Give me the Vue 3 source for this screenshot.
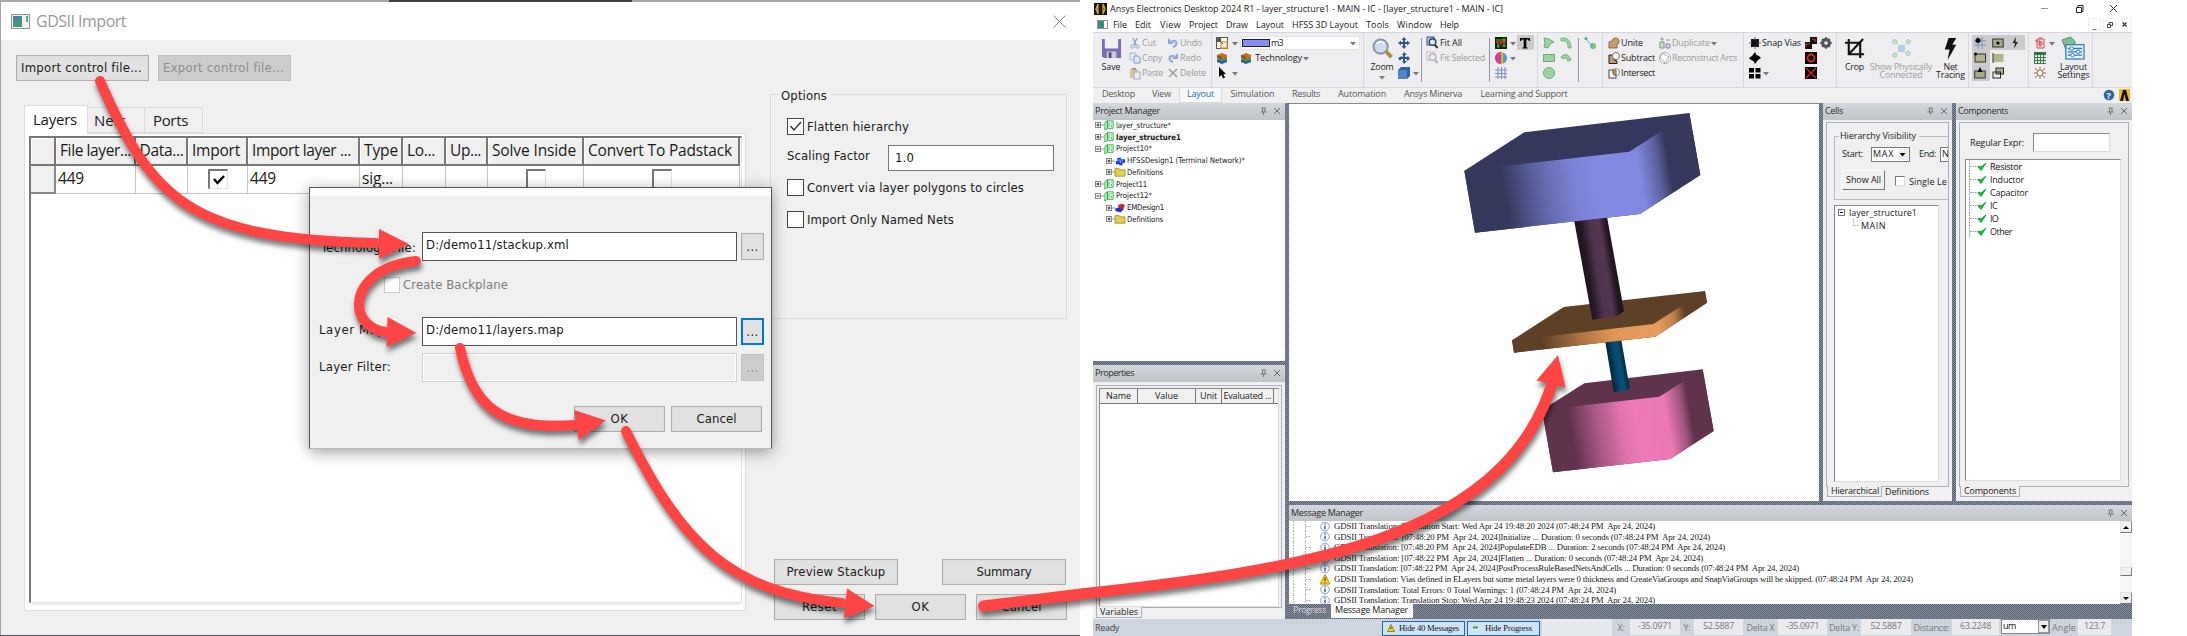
<script setup>
// Spreads a label over a given width by adjusting its letter spacing.
const vFit = {
  mounted(el, { value }) {
    if (!value) return
    const n = el.textContent.length
    const w = el.getBoundingClientRect().width
    el.style.letterSpacing = (value - w) / n + 'px'
  },
}

const columns = [
  { t: '', w: 25 }, { t: 'File layer...', w: 79.5, f: 71 }, { t: 'Data...', w: 52.5, f: 44 },
  { t: 'Import', w: 60, f: 48 }, { t: 'Import layer ...', w: 112, f: 99 }, { t: 'Type', w: 43, f: 34 },
  { t: 'Lo...', w: 43, f: 28 }, { t: 'Up...', w: 42, f: 31 }, { t: 'Solve Inside', w: 96, f: 84 },
  { t: 'Convert To Padstack', w: 156, f: 144 },
]
const gridCols = columns.map((c) => c.w + 'px').join(' ')

const icons = {
  drop: '<path d="M3 5h6L6 8.500z" fill="#777"/>',
  pin: '<path d="M1.500 1h4M2.500 1v4M5 1v4M.5 5h6M3.500 5v3" stroke="#777" fill="none"/><path d="M14 1l6 6M20 1l-6 6" stroke="#666"/>',
  stack: '<path d="M1 8l5-2 5 2v2l-5 2-5-2z" fill="#2d5aa8"/><path d="M1 5.500l5-2 5 2v2l-5 2-5-2z" fill="#2f9a4a"/><path d="M1 3l5-2 5 2v2L6 7 1 5z" fill="#d2691e"/><path d="M1 3l5 2v2L1 5z" fill="#a33"/>',
  cut: '<path d="M4 1l3 7M8 1L5 8" stroke="#8fa6c8" stroke-width="1.400"/><circle cx="3.500" cy="9.500" r="1.700" fill="none" stroke="#8fa6c8"/><circle cx="8.500" cy="9.500" r="1.700" fill="none" stroke="#8fa6c8"/>',
  copy: '<path d="M1 1h5l1 1v6H1z" fill="#e6eefa" stroke="#9db4d8"/><path d="M5 4h4l2 2v5H5z" fill="#dfe9f8" stroke="#7f9ccb"/>',
  paste: '<rect x="1" y="2" width="8" height="9" fill="#e3c58d"/><rect x="3" y="1" width="4" height="2" fill="#999"/><rect x="5" y="5" width="6" height="7" fill="#e9eff8" stroke="#9ab"/>',
  undo: '<path d="M5 4h2c4 0 3 5-1 6" fill="none" stroke="#8aa6da" stroke-width="2"/><path d="M1 1v6h6z" fill="#8aa6da"/>',
  redo: '<path d="M7 4H5c-4 0-3 5 1 6" fill="none" stroke="#8aa6da" stroke-width="2"/><path d="M11 1v6H5z" fill="#8aa6da"/>',
  del: '<path d="M2 2l8 8M10 2l-8 8" stroke="#999" stroke-width="1.500"/>',
  select: '<rect x=".5" y=".5" width="11" height="11" fill="#fff" stroke="#555"/><rect x="1" y="1" width="4" height="4" fill="#555"/><rect x="5" y="5" width="6" height="6" fill="#fff" stroke="#e8943a" stroke-width="1.400"/><path d="M2 2l5 5" stroke="#555"/>',
  cursor: '<path d="M3 0v10l2.500-2L7 11.500l2-1L7.500 7H10z" fill="#000"/>',
  move: '<path d="M6 0l2.500 3H7v2h2V3.500L12 6 9 8.500V7H7v2h1.500L6 12 3.500 9H5V7H3v1.500L0 6l3-2.500V5h2V3H3.500z" fill="#2c5a8c"/>',
  rotate: '<path d="M6 0l3 3H7v2c3 0 3-1 3-1l2 3-3 2V7H7v2h2l-3 3-2-3h1V7c-3 0-3 2-3 2L0 6l4-2v1h1V3H4z" fill="#2c5a8c"/>',
  cube: '<path d="M0 3l3-3h9v9l-3 3H0z" fill="#2c5f9e"/><rect x="0" y="3" width="9" height="9" fill="#4f86c8"/>',
  fitall: '<rect x="0" y="0" width="7" height="8" fill="#cfd8ea" stroke="#334c78"/><circle cx="5.500" cy="5" r="3.300" fill="#dde6f3" stroke="#2b3d63" stroke-width="1.400"/><path d="M8 8l2.500 3" stroke="#333" stroke-width="2"/>',
  fitsel: '<rect x="0" y="0" width="7" height="8" fill="#fff" stroke="#d9a9a9"/><circle cx="5.500" cy="5" r="3.300" fill="#f1eef2" stroke="#b3b3bd" stroke-width="1.400"/><path d="M8 8l2.500 3" stroke="#b3b3bd" stroke-width="2"/>',
  board: '<rect width="12" height="12" fill="#10230b"/><path d="M1 3h10M2 9h3M7 9h4M3 5v6M9 1v9" stroke="#5fc020" stroke-width="1.200"/><path d="M1 5h10M6 5v3" stroke="#f02020" stroke-width="1.600"/>',
  rainbow: '<circle cx="6" cy="6" r="6" fill="#f3c530"/><path d="M6 0a6 6 0 0 0 0 12z" fill="#e0327c"/><path d="M4 .4v11.200L2 10.500v-9z" fill="#b04ae0"/><path d="M8 .4v11.200a6 6 0 0 0 0-11.200z" fill="#39a4e8"/><path d="M5 0h1.500v12H5z" fill="#f05a2a"/>',
  grid: '<path d="M0 3h12M0 6.500h12M0 10h12M3 0v12M6.500 0v12M10 0v12" stroke="#7d8dbd"/>',
  text: '<rect x="-2" y="-2" width="17" height="15" fill="#cbcbcd"/><path d="M1 1h10v3h-1L9 2.500H7.300V10l1.200.800v.7h-5v-.7L4.700 10V2.500H3L2 4H1z" fill="#000"/>',
  poly: '<path d="M1 1l5 1 5 3-4 2-2 4-4-1 1-4z" fill="#9cd3a1" stroke="#6fa877"/>',
  rect: '<rect x=".5" y="2.500" width="11" height="7" fill="#9cd3a1" stroke="#6fa877"/>',
  circle: '<circle cx="6" cy="6" r="5.500" fill="#9cd3a1" stroke="#6fa877"/>',
  arc: '<path d="M1 1h3c4 0 7 3 7 10H8C8 7 7 4 4 4H1z" fill="#9cd3a1" stroke="#6fa877" stroke-width=".8"/>',
  arc2: '<path d="M1 5c3-4 8-3 10 3l-3 1C7 6 5 5 3 7z" fill="#9cd3a1" stroke="#6fa877"/>',
  line: '<path d="M2 2l6 7" stroke="#6a9cc8"/><circle cx="2" cy="1.500" r="1.500" fill="#3dab8a"/><circle cx="9" cy="9" r="3" fill="#5ab8d8"/><path d="M9 6a3 3 0 0 1 0 6z" fill="#98c840"/>',
  unite: '<path d="M1 5l3-1c0-4 7-4 7 0 0 3-2 4-2 4v3H1z" fill="#c79c6c" stroke="#8a6844"/>',
  subtract: '<path d="M1 3h4l1 5 3 1v2.500H1z" fill="#c79c6c" stroke="#222"/><circle cx="8" cy="4" r="3.500" fill="#fff" stroke="#777"/>',
  intersect: '<rect x="1" y="3" width="7" height="8" fill="#fff" stroke="#444"/><circle cx="8" cy="5" r="3.500" fill="#fff" stroke="#888"/><path d="M5 3h3v5H6z" fill="#c79c6c" stroke="#8a6844"/>',
  dup: '<path d="M1 5h4v6H1z" fill="#cde5cf" stroke="#888"/><path d="M7 7h4v4H7z" fill="#cdd2f0" stroke="#88a"/><path d="M3 0v4M1 2h4M7 3h4" stroke="#999"/>',
  recon: '<circle cx="6" cy="6" r="5.500" fill="#fff" stroke="#aaa"/><path d="M3 1l7 4-4 6-5-6z" fill="none" stroke="#aaa"/>',
  snap: '<rect x="2" y="2" width="8" height="8" fill="#111"/><path d="M6 0v12M0 6h12" stroke="#5a6aaa"/><rect x="3" y="3" width="6" height="6" fill="#111"/>',
  diamond: '<path d="M6 0l1.500 3L10 4l2 2-3 2-1.500 2L6 12 4.500 9 2 8 0 6l3-2z" fill="#000"/>',
  four: '<path d="M0 1h5v4.500H0zM6.500 1h5v4.500h-5zM0 7h5v4.500H0zM6.500 7h5v4.500h-5z" fill="#000"/>',
  via1: '<rect x="5" width="7" height="7" fill="#111"/><rect y="5" width="7" height="7" fill="#111"/><path d="M7 2h3v3M1 10V7h4" stroke="#e33" fill="none"/>',
  via2: '<rect width="12" height="12" fill="#000"/><circle cx="6" cy="6" r="3.500" fill="none" stroke="#e22" stroke-width="1.800"/>',
  via3: '<rect width="12" height="12" fill="#000"/><path d="M1 1l10 10M11 1L1 11" stroke="#e22" stroke-width="1.200"/>',
  gear: '<circle cx="6" cy="6" r="3.500" fill="none" stroke="#555" stroke-width="3"/><path d="M6 0v12M0 6h12M2 2l8 8M10 2l-8 8" stroke="#555" stroke-width="1.500"/><circle cx="6" cy="6" r="1.800" fill="#eee"/>',
  box1: '<path d="M0 4h12M0 8h12M4 0v12M8 0v12" stroke="#8090b8"/><circle cx="4" cy="3.500" r="2.500" fill="#000"/>',
  box2: '<rect x=".7" y="2" width="10.500" height="8" fill="#a8a888" stroke="#333"/><circle cx="6" cy="6" r="1.600" fill="#000"/>',
  bolt: '<path d="M7 0L3.500 6H6l-1 5.500L9 5H6.500z" fill="#222"/>',
  box3: '<rect x="1" y="2" width="10.500" height="8" fill="#b4b48c" stroke="#333"/><circle cx="1.500" cy="2" r="1.500"/>',
  box4: '<rect x="1" y="2" width="10.500" height="8" fill="#b4b48c"/><path d="M1 1v10" stroke="#333"/>',
  box5: '<rect x=".7" y="4" width="10.500" height="7" fill="#a8a888" stroke="#333"/><path d="M6 0l2.500 5h-5z"/>',
  box6: '<rect x="4" y="1" width="7.500" height="6" fill="#b4b48c" stroke="#222"/><rect x="1" y="5" width="7.500" height="6" fill="none" stroke="#222"/>',
  red: '<path d="M3 2h7v9H3zM1 4h5v6M5 1h3M5 5h3v3H5z" fill="none" stroke="#e04050"/>',
  calc: '<rect width="12" height="12" fill="#dff0e0"/><rect width="12" height="3" fill="#2c7a3c"/><path d="M0 5.500h12M0 8.500h12M0 11.500h12M.5 3v9M3.500 3v9M6.500 3v9M9.500 3v9" stroke="#3c7a4c"/>',
  sun: '<circle cx="6" cy="6" r="3" fill="#fff" stroke="#a08050"/><path d="M6 0v3M6 9v3M0 6h3M9 6h3M1 1l3 3M8 8l3 3M11 1L8 4M1 11l3-3" stroke="#c05a48"/>',
  project: '<path d="M1 3l3-2v9l-3 2zM4 1h7v9H4z" fill="#e2fbe2" stroke="#19a83a"/><path d="M6 3v5M9 3v1M9 6v2" stroke="#19a83a"/>',
  hfss: '<path d="M3 2h4v3H3zM7 4h5v4H7zM1 6h5v4H1zM5 8h4v3H5z" fill="#1c34e0"/><path d="M2 4h8v3H3z" fill="#3b83ff"/>',
  folder: '<path d="M0 2h5l1 1.500h6V11H0z" fill="#e3d24e" stroke="#97882a"/>',
  em: '<path d="M0 7l5-2 6 2-4 4-6-1z" fill="#1c2fd0"/><path d="M4 2l5-1 3 2-2 4-6-1z" fill="#d81e2c"/>',
}

const L = (i, t, w, dis) => [{ i }, { t, w, dis }]
const rawRibbon = [
  { at: 1093, big: 'Save', lines: [['Save', 19]] },
  { at: 1129, rows: [L('cut', 'Cut', 14, 1), L('copy', 'Copy', 20, 1), L('paste', 'Paste', 21, 1)] },
  { at: 1167, rows: [L('undo', 'Undo', 22, 1), L('redo', 'Redo', 21, 1), L('del', 'Delete', 26, 1)] },
  { at: 1211, sep: 1 },
  { at: 1216, rows: [[{ i: 'select' }], [{ i: 'stack' }], [{ i: 'cursor' }]] },
  { at: 1229, rows: [[{ i: 'drop' }], [], [{ i: 'drop' }]] },
  { at: 1240, rows: [[{ combo: 1 }], [{ i: 'stack' }, { t: ' Technology', w: 49 }, { i: 'drop', tight: 1 }], []] },
  { at: 1363, sep: 1 },
  { at: 1366, big: 'Zoom', lines: [['Zoom', 23]], arrow: 1 },
  { at: 1398, rows: [[{ i: 'move' }], [{ i: 'rotate' }], [{ i: 'cube' }]] },
  { at: 1410, rows: [[], [], [{ i: 'drop' }]] },
  { at: 1421, sep: 1, short: 1 },
  { at: 1427, rows: [L('fitall', 'Fit All', 22), L('fitsel', 'Fit Selected', 45, 1), []] },
  { at: 1489, sep: 1, short: 1 },
  { at: 1495, rows: [[{ i: 'board' }], [{ i: 'rainbow' }], [{ i: 'grid' }]] },
  { at: 1507, rows: [[{ i: 'drop' }], [{ i: 'drop' }], []] },
  { at: 1519, rows: [[{ i: 'text' }], [], []] },
  { at: 1537, sep: 1 },
  { at: 1543, rows: [[{ i: 'poly' }], [{ i: 'rect' }], [{ i: 'circle' }]] },
  { at: 1560, rows: [[{ i: 'arc' }], [{ i: 'arc2' }], []] },
  { at: 1578, sep: 1, short: 1 },
  { at: 1584, rows: [[{ i: 'line' }], [], []] },
  { at: 1602, sep: 1 },
  { at: 1608, rows: [L('unite', 'Unite', 22), L('subtract', 'Subtract', 34), L('intersect', 'Intersect', 34)] },
  { at: 1659, rows: [[{ i: 'dup' }, { t: 'Duplicate', w: 38, dis: 1 }, { i: 'drop', tight: 1 }], L('recon', 'Reconstruct Arcs', 65, 1), []] },
  { at: 1743, sep: 1 },
  { at: 1749, rows: [L('snap', 'Snap Vias', 39), [{ i: 'diamond' }], [{ i: 'four' }, { i: 'drop', tight: 1 }]] },
  { at: 1805, rows: [[{ i: 'via1' }], [{ i: 'via2' }], [{ i: 'via3' }]] },
  { at: 1820, rows: [[{ i: 'gear' }], [], []] },
  { at: 1836, sep: 1 },
  { at: 1840, big: 'Crop', lines: [['Crop', 19]] },
  { at: 1869, big: 'Show', dis: 1, lines: [['Show Physically', 62], ['Connected', 43]] },
  { at: 1933, big: 'Net', lines: [['Net', 14], ['Tracing', 29]] },
  { at: 1968, sep: 1 },
  { at: 1972, rows: [[{ i: 'box1' }], [{ i: 'box3' }], [{ i: 'box5' }]], tog: [1, 1, 1] },
  { at: 1990, rows: [[{ i: 'box2' }], [{ i: 'box4' }], [{ i: 'box6' }]], tog: [1, 0, 0] },
  { at: 2007, rows: [[{ i: 'bolt' }], [], []], tog: [1, 0, 0] },
  { at: 2025, rows: [] },
  { at: 2028, sep: 1 },
  { at: 2034, rows: [[{ i: 'red' }], [{ i: 'calc' }], [{ i: 'sun' }]] },
  { at: 2046, rows: [[{ i: 'drop' }], [], []] },
  { at: 2055, big: 'Layout', lines: [['Layout', 27], ['Settings', 32]] },
  { at: 2092, sep: 1 },
  { at: 2132 },
]
const ribbon = rawRibbon.slice(0, -1).map((c, i) => ({ ...c, w: rawRibbon[i + 1].at - c.at }))
const bigIcons = {
  Save: '<path d="M1 1h20v20H3l-2-2z" fill="#7a6bb0"/><rect x="4" y="1" width="14" height="10" fill="#eef0f6"/><rect x="6" y="14" width="10" height="7" fill="#c9cad6"/><rect x="8" y="15" width="3" height="6" fill="#5a4d8c"/>',
  Zoom: '<circle cx="9" cy="9" r="7.500" fill="#cfdcee" stroke="#8892a8" stroke-width="2"/><path d="M5 6c2-3 6-3 8 0" stroke="#fff" stroke-width="2" fill="none"/><path d="M14.500 14l6 6" stroke="#b08a38" stroke-width="4"/>',
  Crop: '<path d="M5 1v16h16M1 5h16v16M5 17L20 1" fill="none" stroke="#111" stroke-width="2.200"/>',
  Show: '<path d="M11 11L4 4M11 11l7-7M11 11l-7 7M11 11l7 7" stroke="#c4d4c8"/><circle cx="11" cy="11" r="4" fill="#b4cbe8"/><g fill="#c9e3cf" stroke="#a8c4ae"><circle cx="4" cy="4" r="2.200"/><circle cx="18" cy="4" r="2.200"/><circle cx="4" cy="18" r="2.200"/><circle cx="18" cy="16" r="2.200"/></g>',
  Net: '<path d="M9 0h8l-4 7h4L8 23l2-11H5z" fill="#111"/>',
  Layout: '<path d="M-1 2l9-3 5 5-3 6-7 2z" fill="#7fc096" stroke="#4a8a60"/><rect x="3" y="7" width="19" height="15" fill="#eaf3fc" stroke="#2f78c4" stroke-width="1.300"/><path d="M5 11h15M5 14.500h15M5 18h15" stroke="#2f78c4" stroke-width="1.400"/><circle cx="9" cy="11" r="1.800" fill="#fff" stroke="#2f78c4"/><circle cx="16" cy="14.500" r="1.800" fill="#fff" stroke="#2f78c4"/><circle cx="10" cy="18" r="1.800" fill="#fff" stroke="#2f78c4"/>',
}
const menu = [['File', 14, 8], ['Edit', 16, 9], ['View', 21, 8], ['Project', 29, 8], ['Draw', 22, 8], ['Layout', 28, 8], ['HFSS 3D Layout', 66, 8], ['Tools', 23, 8], ['Window', 35, 8], ['Help', 19, 8]]
const tabs = [['Desktop', 33, 51], ['View', 19, 35], ['Layout', 27, 43], ['Simulation', 44, 61], ['Results', 28, 46], ['Automation', 48, 66], ['Ansys Minerva', 58, 76], ['Learning and Support', 87, 106]]
const tree = [
  ['layer_structure*', 55, 0, 'project', '+'], ['layer_structure1', 65, 0, 'project', '+', 1], ['Project10*', 36, 0, 'project', '-'],
  ['HFSSDesign1 (Terminal Network)*', 118, 1, 'hfss', '+'], ['Definitions', 36, 1, 'folder', '+'], ['Project11', 31, 0, 'project', '+'],
  ['Project12*', 36, 0, 'project', '-'], ['EMDesign1', 37, 1, 'em', '+'], ['Definitions', 36, 1, 'folder', '+'],
]
const messages = [
  ['GDSII Translation: Translation Start: Wed Apr 24 19:48:20 2024 (07:48:24 PM  Apr 24, 2024)', 321],
  ['GDSII Translation: [07:48:20 PM  Apr 24, 2024]Initialize ... Duration: 0 seconds (07:48:24 PM  Apr 24, 2024)', 376],
  ['GDSII Translation: [07:48:20 PM  Apr 24, 2024]PopulateEDB ... Duration: 2 seconds (07:48:24 PM  Apr 24, 2024)', 391],
  ['GDSII Translation: [07:48:22 PM  Apr 24, 2024]Flatten ... Duration: 0 seconds (07:48:24 PM  Apr 24, 2024)', 369],
  ['GDSII Translation: [07:48:22 PM  Apr 24, 2024]PostProcessRuleBasedNetsAndCells ... Duration: 0 seconds (07:48:24 PM  Apr 24, 2024)', 465],
  ['GDSII Translation: Vias defined in ELayers but some metal layers were 0 thickness and CreateViaGroups and SnapViaGroups will be skipped. (07:48:24 PM  Apr 24, 2024)', 579, 1],
  ['GDSII Translation: Total Errors: 0 Total Warnings: 1 (07:48:24 PM  Apr 24, 2024)', 282],
  ['GDSII Translation: Translation Stop: Wed Apr 24 19:48:23 2024 (07:48:24 PM  Apr 24, 2024)', 321],
]
const parts = [['Resistor', 32], ['Inductor', 34], ['Capacitor', 38], ['IC', 7], ['IO', 8], ['Other', 22]]
const readouts = [
  { l: 'X:', lw: 7, a: 18, v: '-35.0971', vw: 34, b: 50 }, { l: 'Y:', lw: 7, a: 14, v: '52.5887', vw: 31, b: 49 },
  { l: 'Delta X', lw: 28, a: 35, v: '-35.0971', vw: 33, b: 49 }, { l: 'Delta Y:', lw: 30, a: 34, v: '52.5887', vw: 31, b: 50 },
  { l: 'Distance:', lw: 36, a: 41, v: '63.2248', vw: 31, b: 47 },
]
</script>

<template>
  <div class="page">
    <section class="import">
      <div class="edge"><i></i></div>
      <header class="ititle">
        <svg width="19" height="15"><rect x=".5" y=".5" width="18" height="14" fill="#eef2f3" stroke="#8b979c" /><rect x="2" y="2" width="9" height="11" fill="#47947e" /><rect x="2" y="2" width="9" height="4" fill="#4a83a0" /><rect x="15" y="2" width="2" height="6" fill="#58a890" /></svg>
        <span v-fit="90">GDSII Import</span>
        <svg class="x" width="13" height="13"><path d="M.5 .5l12 12M12.500 .5l-12 12" stroke="#888" /></svg>
      </header>
      <div class="files">
        <button><span v-fit="121">Import control file...</span></button>
        <button class="off"><span v-fit="121">Export control file...</span></button>
      </div>
      <div class="ibody">
        <div class="layers">
          <nav><b class="on"><span v-fit="44">Layers</span></b><b><span v-fit="32">Nets</span></b><b class="p"><span v-fit="35">Ports</span></b></nav>
          <div class="sheet">
            <div class="gridbox">
              <div class="grow head" :style="{ gridTemplateColumns: gridCols }">
                <span v-for="(c, i) in columns" :key="i"><em v-fit="c.f">{{ c.t }}</em></span>
              </div>
              <div class="grow" :style="{ gridTemplateColumns: gridCols }">
                <span class="rowhead"></span><span class="val"><em v-fit="26">449</em></span><span></span>
                <span class="mid"><i class="sunk"><svg width="14" height="14"><path d="M2 6l3.500 4L12 3" fill="none" stroke="#000" stroke-width="2.400" /></svg></i></span>
                <span class="val"><em v-fit="26">449</em></span><span class="val"><em v-fit="31">sig...</em></span><span></span><span></span>
                <span class="mid"><i class="sunk"></i></span><span class="mid"><i class="sunk"></i></span>
              </div>
            </div>
          </div>
        </div>
        <div class="side">
          <div class="options">
            <h4><span v-fit="46">Options</span></h4>
            <label><i class="cb"><svg width="15" height="15"><path d="M2.500 7l3.500 4 7-8" fill="none" stroke="#333" stroke-width="1.400" /></svg></i><span v-fit="102">Flatten hierarchy</span></label>
            <div class="scale"><span v-fit="83">Scaling Factor</span><div><span v-fit="19">1.0</span></div></div>
            <label class="c2"><i class="cb"></i><span v-fit="217">Convert via layer polygons to circles</span></label>
            <label class="c3"><i class="cb"></i><span v-fit="147">Import Only Named Nets</span></label>
          </div>
          <div class="btns top"><button><span v-fit="99">Preview Stackup</span></button><button><span v-fit="55">Summary</span></button></div>
          <div class="btns"><button><span v-fit="35">Reset</span></button><button><span v-fit="18">OK</span></button><button><span v-fit="40">Cancel</span></button></div>
        </div>
      </div>

      <div class="dialog">
        <div class="strip"></div>
        <div class="field f1"><label><span v-fit="95">Technology File:</span></label><div class="inp"><span v-fit="143">D:/demo11/stackup.xml</span></div><button>...</button></div>
        <div class="back"><i></i><span v-fit="105">Create Backplane</span></div>
        <div class="field"><label><span v-fit="71">Layer Map:</span></label><div class="inp"><span v-fit="138">D:/demo11/layers.map</span></div><button class="focus">...</button></div>
        <div class="field f3"><label><span v-fit="72">Layer Filter:</span></label><div class="inp dis"></div><button class="off">...</button></div>
        <div class="acts"><button><span v-fit="18">OK</span></button><button><span v-fit="40">Cancel</span></button></div>
      </div>
    </section>

    <section class="app">
      <header class="atitle">
        <svg width="13" height="12"><rect width="13" height="12" fill="#17130a" /><path d="M4 1L2 6l2 5M9 1l2 5-2 5M4 1v10M9 1v10" fill="none" stroke="#e0a52a" stroke-width="1.300" /></svg>
        <span v-fit="393">Ansys Electronics Desktop 2024 R1 - layer_structure1 - MAIN - IC - [layer_structure1 - MAIN - IC]</span>
        <svg class="win" width="78" height="12"><path d="M2 5.500h7" stroke="#999" /><path d="M37.500 4.500h5v5h-5zM39 4V2.500h5v6h-1" fill="none" stroke="#222" /><path d="M71 2l7 7M78 2l-7 7" stroke="#333" /></svg>
      </header>
      <div class="menu">
        <svg width="11" height="9"><rect x=".5" y=".5" width="10" height="8" fill="#fff" stroke="#8b979c" /><rect x="1" y="1" width="6" height="7" fill="#3f8a7c" /></svg>
        <span v-for="m in menu" :key="m[0]" :style="{ marginRight: m[2] + 'px' }" v-fit="m[1]">{{ m[0] }}</span>
        <div class="mdi"><i>_</i><i><svg width="6" height="6"><path d="M.5 2.500h3v3h-3zM2 2V.5h3.500v3H4" fill="none" stroke="#445" /></svg></i><i><svg width="5" height="5"><path d="M.5 .5l4 4M4.500 .5l-4 4" stroke="#334" stroke-width="1.200" /></svg></i></div>
      </div>
      <div class="ribbon">
        <div v-for="(c, ci) in ribbon" :key="ci" class="col" :class="{ sep: c.sep, short: c.short, dis: c.dis }" :style="{ width: c.w + 'px' }">
          <template v-if="c.big">
            <svg class="bigi" width="21" height="22" viewBox="0 0 22 23" v-html="bigIcons[c.big]"></svg>
            <div class="bigt" v-for="l in c.lines" :key="l[0]"><span v-fit="l[1]">{{ l[0] }}</span></div>
            <svg v-if="c.arrow" class="barrow" width="12" height="10" v-html="icons.drop"></svg>
          </template>
          <div v-else v-for="(r, ri) in c.rows" :key="ri" class="rr" :class="{ tog: c.tog && c.tog[ri], ctr: c.tog }">
            <template v-for="(it, k) in r" :key="k">
              <svg v-if="it.i" :class="{ tight: it.tight }" width="12" height="12" v-html="icons[it.i]"></svg>
              <span v-else-if="it.t" :class="{ dis: it.dis }" v-fit="it.w">{{ it.t }}</span>
              <div v-else class="layercombo"><i></i><span v-fit="12">m3</span><svg width="12" height="12" v-html="icons.drop"></svg></div>
            </template>
          </div>
        </div>
      </div>
      <div class="rtabs">
        <div v-for="t in tabs" :key="t[0]" :class="{ on: t[0] === 'Layout' }" :style="{ width: t[2] + 'px' }"><span v-fit="t[1]">{{ t[0] }}</span></div>
        <svg class="help" width="27" height="12"><circle cx="6" cy="6" r="5.300" fill="#2d67b0" /><text x="3.600" y="9.500" font-size="9" font-weight="bold" fill="#fff" font-family="Open Sans">?</text><rect x="16" width="11" height="12" fill="#f3b91c" /><path d="M17 12l3-11h3l3 11h-3l-1.500-7L20 12z" fill="#111" /></svg>
      </div>
      <div class="work">
        <div class="left">
          <div class="ph"><span v-fit="65">Project Manager</span><svg width="20" height="8" v-html="icons.pin"></svg></div>
          <div class="ptree">
            <div v-for="(r, i) in tree" :key="i" class="tr" :class="{ sub: r[2], cur: r[5] }">
              <svg class="ex" width="9" height="6"><path d="M5 3h4" stroke="#999" /><rect x=".5" y=".5" width="5" height="5" fill="#fff" stroke="#888" /><path :d="r[4] === '+' ? 'M1.500 3h3M3 1.500v3' : 'M1.500 3h3'" stroke="#222" /></svg>
              <svg width="10" height="10" viewBox="0 0 12 12" v-html="icons[r[3]]"></svg>
              <span v-fit="r[1]">{{ r[0] }}</span>
            </div>
          </div>
          <div class="hatch h4"></div>
          <div class="ph"><span v-fit="39">Properties</span><svg width="20" height="8" v-html="icons.pin"></svg></div>
          <div class="props">
            <div class="frame"><div class="ptable"><div class="phead"><span><em v-fit="25">Name</em></span><span><em v-fit="23">Value</em></span><span><em v-fit="17">Unit</em></span><span><em v-fit="48">Evaluated ...</em></span><span></span></div></div></div>
            <div class="vtab"><span v-fit="38">Variables</span></div>
          </div>
        </div>
        <div class="hatch v4"></div>
        <div class="rightside">
          <div class="upper">
            <div class="canvas">
              <svg width="530" height="397" viewBox="-451 12 1590 1191">
                <defs>
                  <linearGradient id="gb" gradientUnits="userSpaceOnUse" x1="180" y1="200" x2="676" y2="115"><stop offset="0" stop-color="#35385c" /><stop offset=".22" stop-color="#5f66a6" /><stop offset=".42" stop-color="#7a82d6" /><stop offset=".58" stop-color="#828ae4" /><stop offset=".82" stop-color="#8088e0" /><stop offset=".93" stop-color="#5b629e" /><stop offset="1" stop-color="#35385c" /></linearGradient>
                  <linearGradient id="gp" gradientUnits="userSpaceOnUse" x1="430" y1="505" x2="529" y2="490"><stop offset="0" stop-color="#1e141f" /><stop offset=".15" stop-color="#251825" /><stop offset=".42" stop-color="#4f334d" /><stop offset=".7" stop-color="#533552" /><stop offset=".9" stop-color="#21161f" /></linearGradient>
                  <linearGradient id="go" gradientUnits="userSpaceOnUse" x1="305" y1="712" x2="737" y2="640"><stop offset="0" stop-color="#5e4026" /><stop offset=".25" stop-color="#a8713f" /><stop offset=".5" stop-color="#e0965a" /><stop offset=".8" stop-color="#e89d5d" /><stop offset=".92" stop-color="#bd8049" /><stop offset="1" stop-color="#5e4026" /></linearGradient>
                  <linearGradient id="gt" gradientUnits="userSpaceOnUse" x1="510" y1="800" x2="558" y2="792"><stop offset="0" stop-color="#04222f" /><stop offset=".4" stop-color="#07476b" /><stop offset=".7" stop-color="#085078" /><stop offset="1" stop-color="#042a3c" /></linearGradient>
                  <linearGradient id="gk" gradientUnits="userSpaceOnUse" x1="383" y1="922" x2="740" y2="861"><stop offset="0" stop-color="#60334d" /><stop offset=".2" stop-color="#a35583" /><stop offset=".42" stop-color="#df72ad" /><stop offset=".55" stop-color="#ef7ab9" /><stop offset=".8" stop-color="#ea78b5" /><stop offset=".93" stop-color="#a05580" /><stop offset="1" stop-color="#60334d" /></linearGradient>
                </defs>
                <path d="M308 930L435 850L790 808L823 993L693 1077L341 1117z" fill="#60334d" />
                <path d="M308 930L660 890L790 808L823 993L693 1077L341 1117z" fill="url(#gk)" />
                <path d="M497 720L545 715L571 865L560 872L523 876z" fill="url(#gt)" />
                <path d="M218 721L373 621L797 573L803 608L648 710L224 758z" fill="#5e4026" />
                <path d="M218 721L642 672L797 573L803 608L648 710L224 758z" fill="url(#go)" />
                <path d="M404 360L503 350L554 633L535 648L459 659z" fill="url(#gp)" />
                <path d="M75 212L255 97L750 39L783 225L602 342L107 398z" fill="#35385c" />
                <path d="M75 212L570 155L750 39L783 225L602 342L107 398z" fill="url(#gb)" />
              </svg>
            </div>
            <div class="hatch v4"></div>
            <div class="cells">
              <div class="ph"><span v-fit="18">Cells</span><svg width="20" height="8" v-html="icons.pin"></svg></div>
              <div class="frame cf">
                <div class="hv">
                  <h5><span v-fit="76">Hierarchy Visibility</span></h5>
                  <div class="hrow"><span v-fit="21">Start:</span><div class="cmb"><span v-fit="21">MAX</span><svg width="9" height="9"><path d="M1.500 3h6l-3 3.500z" /></svg></div><span class="end" v-fit="17">End:</span><div class="cmb cut">N</div></div>
                  <div class="hrow two"><button><span v-fit="35">Show All</span></button><i></i><span v-fit="38">Single Le</span></div>
                </div>
                <div class="ctree"><div><svg width="7" height="7"><rect x=".5" y=".5" width="6" height="6" fill="#fff" stroke="#777" /><path d="M2 3.500h3" stroke="#222" /></svg><span v-fit="68">layer_structure1</span></div><div class="kid"><svg width="6" height="13"><path d="M.5 0v6.500h5" fill="none" stroke="#aaa" stroke-dasharray="1.500 1" /></svg><span v-fit="25">MAIN</span></div></div>
              </div>
              <div class="btabs"><b class="on"><span v-fit="48">Hierarchical</span></b><b><span v-fit="44">Definitions</span></b></div>
            </div>
            <div class="hatch v4"></div>
            <div class="comps">
              <div class="ph"><span v-fit="50">Components</span><svg width="20" height="8" v-html="icons.pin"></svg></div>
              <div class="frame pf">
                <div class="rx"><span v-fit="54">Regular Expr:</span><i></i></div>
                <div class="plist">
                  <div v-for="(p, i) in parts" :key="p[0]" :class="{ cur: i === 0 }"><svg width="24" height="13"><path d="M3.500 0v13M4 6.500h8" stroke="#999" stroke-dasharray="1.500 1" /><path d="M12 7l3 3.500L20 3l-5 4-2-1z" fill="#16c13a" stroke="#16a830" /></svg><span v-fit="p[1]">{{ p[0] }}</span></div>
                </div>
              </div>
              <div class="btabs"><b class="on c"><span v-fit="52">Components</span></b></div>
            </div>
          </div>
          <div class="hatch h4"></div>
          <div class="ph mh"><span v-fit="72">Message Manager</span><svg width="20" height="8" v-html="icons.pin"></svg></div>
          <div class="msgs">
            <div class="mlist">
              <div v-for="(m, i) in messages" :key="i">
                <svg width="28" height="11"><path d="M3.500 0v11M15.500 0v11M16 5.500h5" stroke="#aaa" stroke-dasharray="1.500 1.500" fill="none" /></svg>
                <svg v-if="m[2]" width="14" height="11"><path d="M7 .5l5 9.500H2z" fill="#ffd51c" stroke="#b89400" /><path d="M7 3.500v3.500M7 8v1" stroke="#222" /></svg>
                <svg v-else width="14" height="11"><circle cx="7" cy="5.500" r="4.300" fill="#fff" stroke="#8a9ccc" /><path d="M7 2.500v1.200M7 4.700v3.500" stroke="#2a4ad0" stroke-width="1.400" /></svg>
                <span v-fit="m[1]">{{ m[0] }}</span>
              </div>
            </div>
            <div class="sb"><i><svg width="7" height="5"><path d="M0 4h6L3 1z" /></svg></i><i class="thumb"></i><i><svg width="7" height="5"><path d="M0 1h6L3 4z" /></svg></i></div>
          </div>
          <div class="hatch mtabs"><span v-fit="33">Progress</span><b><span v-fit="73">Message Manager</span></b></div>
        </div>
      </div>
      <footer class="status">
        <span class="ready" v-fit="24">Ready</span>
        <div class="sbtn"><svg width="8" height="8"><path d="M4 .5L7.500 7.500h-7z" fill="#ffd51c" stroke="#a08000" /><path d="M4 3v2" stroke="#222" /></svg><span v-fit="60">Hide 40 Messages</span></div>
        <div class="sbtn s2"><svg width="8" height="8"><path d="M1 3h6v3H1z" fill="#e8f4e8" /><path d="M1 3.500h5" stroke="#19b040" stroke-width="2" /></svg><span v-fit="47">Hide Progress</span></div>
        <div class="blank"></div>
        <template v-for="r in readouts" :key="r.l"><div class="rl" :style="{ width: r.a + 'px' }"><span v-fit="r.lw">{{ r.l }}</span></div><div class="rv" :style="{ width: r.b + 'px' }"><span v-fit="r.vw">{{ r.v }}</span></div></template>
        <div class="unit"><span v-fit="13">um</span><i><svg width="8" height="6"><path d="M1 1h6L4 5z" /></svg></i></div>
        <div class="rl ang"><span v-fit="24">Angle</span></div><div class="rv av"><span v-fit="21">123.7</span></div>
      </footer>
    </section>

    <svg class="arrows" width="2187" height="636">
      <g fill="none" stroke="#ff4444" stroke-width="10" stroke-linecap="round">
        <path d="M100 81C152 200 190 239 376 243" />
        <path d="M416 261C378 265 358 285 359 307C360 320 372 331 386 332" />
        <path d="M460 348C472 405 500 431 574 425" />
        <path d="M626 431C682 545 730 592 842 603" />
        <path d="M983.500 606L1085 593.500C1300 570 1500 540 1551 387" stroke-width="11" />
      </g>
      <g fill="#ff4444">
        <path d="M379 229L409 244L379 259z" /><path d="M387.500 317L416.500 333L386.500 347z" /><path d="M574 410L606 420.500L579 440z" />
        <path d="M847 588.500L874.500 606L844 618.500z" /><path d="M1536.500 380.500L1558 355L1565.500 387.500z" />
      </g>
    </svg>
  </div>
</template>

<style>
html, body { margin: 0; background: #fff; overflow: hidden; }
</style>

<style scoped>
* { box-sizing: border-box; }
.page { width: 2187px; height: 636px; position: relative; overflow: hidden; display: flex; gap: 13px; background: #fff; font-family: "Open Sans", "Noto Sans", sans-serif; color: #1a1a1a; }
span, em { white-space: pre; display: inline-block; font-style: normal; flex: none; }
svg { flex: none; overflow: visible; display: block; }
button { font: inherit; color: inherit; padding: 0; margin: 0; }
.arrows { position: absolute; left: 0; top: 0; filter: drop-shadow(1px 5px 2.500px rgba(0, 0, 0, .5)); }

.import { width: 1080px; height: 635px; background: #f0f0f0; border-left: 1px solid #a5a5a5; position: relative; font: 13px/16px "DejaVu Sans Condensed", "DejaVu Sans", sans-serif; font-stretch: condensed; flex: none; box-shadow: 0 1px 0 #50505a; }
.edge { height: 2px; background: #a8a8a8; padding-left: 388px; }
.edge i { display: block; width: 243px; height: 2px; background: #40404c; }
.ititle { height: 38px; background: #fff; display: flex; align-items: center; padding: 0 14px 0 10px; font: 16px/20px "Open Sans", sans-serif; color: #999; }
.ititle span { margin-left: 6px; }
.ititle .x { margin-left: auto; }
.files { display: flex; gap: 9px; margin: 15px 0 0 15px; }
.import button { height: 26px; background: #e1e1e1; border: 1px solid #adadad; outline: 1px solid #dcdcdc; outline-offset: -2px; display: flex; align-items: center; justify-content: center; }
.files button { width: 133px; justify-content: flex-start; padding-left: 4px; }
.import button.off { background: #cccccc; border-color: #bfbfbf; color: #8d8d8d; outline: none; }
.ibody { display: flex; }
.layers { margin: 24px 0 0 23px; width: 722px; }
.layers nav { display: flex; align-items: flex-end; height: 28px; font: 15px/18px "Open Sans", sans-serif; }
.layers nav b { font-weight: 400; height: 26px; border: 1px solid #dcdcdc; border-left: 0; width: 57px; padding: 3px 0 0 6px; }
.layers nav b.p { width: 58px; padding-left: 8px; }
.layers nav b.on { background: #fff; height: 29px; margin-bottom: -1px; width: 64px; border: 1px solid #dcdcdc; border-bottom: 0; padding: 4px 0 0 8px; z-index: 1; }
.sheet { height: 478px; background: #fff; border: 1px solid #dcdcdc; padding: 2px 3px 8px 4px; }
.gridbox { height: 467px; border: 2px solid #777; border-right: 1px solid #e3e3e3; border-bottom: 1px solid #e3e3e3; font: 15.500px/20px "Open Sans", sans-serif; overflow: hidden; box-shadow: 0 4px 0 -2px #eee; }
.grow { display: grid; height: 28px; }
.grow > span { border-right: 1px solid #c6c6c6; border-bottom: 1px solid #c6c6c6; overflow: hidden; }
.grow.head { height: 28px; }
.grow.head > span { background: #f0f0f0; border-right: 2px solid #777; border-bottom: 2px solid #777; box-shadow: inset 1px 1px 0 #fff; padding: 2px 0 0 4px; }
.grow .rowhead { background: #f0f0f0; border-right: 2px solid #888; border-bottom: 2px solid #888; }
.grow .val { padding: 2px 0 0 2px; }
.grow .mid { display: flex; justify-content: center; padding-top: 3px; }
.sunk { width: 20px; height: 20px; border: 1px solid #e3e3e3; border-top: 2px solid #777; border-left: 2px solid #777; padding: 2px; flex: none; }
.side { margin-left: 24px; width: 297px; }
.options { margin-top: 13px; height: 225px; border: 1px solid #dcdcdc; padding-left: 16px; }
.options h4 { margin: -9px 0 1px -8px; width: 52px; padding-left: 2px; font-weight: 400; font-size: 13px; height: 18px; line-height: 19px; background: #f0f0f0; }
.options label { display: flex; align-items: center; margin-top: 14px; height: 17px; gap: 3px; }
.cb { width: 17px; height: 17px; border: 1.500px solid #444; background: #fff; flex: none; }
.scale { display: flex; height: 26px; margin-top: 10px; }
.scale > span { margin-top: 3px; }
.scale div { margin-left: 18px; width: 166px; border: 1px solid #777; background: #fff; height: 26px; padding: 4px 0 0 6px; }
.options .c2 { margin-top: 8px; }
.options .c3 { margin-top: 15px; }
.btns { display: flex; justify-content: space-between; margin: 9px 0 0 4px; }
.btns.top { margin-top: 240px; width: 292px; }
.btns.top button { width: 124px; }
.btns button { width: 91px; }

.dialog { position: absolute; left: 308px; top: 187px; width: 463px; height: 262px; background: #f0f0f0; border: 1px solid #555; border-bottom-color: #bbb; box-shadow: 0 3px 14px rgba(0, 0, 0, .38); }
.strip { height: 8px; background: #fff; }
.field { display: flex; height: 29px; padding-left: 9px; }
.field.f1 { margin-top: 36px; }
.field label { width: 103px; padding-top: 5px; flex: none; }
.f1 label { padding: 8px 0 0 2px; }
.f3 label { padding-top: 6px; }
.inp { width: 315px; height: 29px; border: 1.500px solid #555; background: #fff; padding: 4px 0 0 3px; }
.inp.dis { background: #f0f0f0; border: 1px solid #d0d0d0; box-shadow: inset 0 0 0 1px #fff; }
.field button { width: 23px; margin: 1px 0 0 4px; letter-spacing: .5px; align-items: flex-end; padding-bottom: 4px; height: 27px; }
.import .field button.focus { border: 2px solid #0078d7; outline: none; padding-bottom: 3px; }
.back { display: flex; align-items: center; height: 16px; margin: 16px 0 24px 74px; color: #7c7c7c; gap: 3px; }
.back i { width: 16px; height: 16px; background: #fff; border: 1px solid #ccc; }
.field.f3 { margin-top: 7px; }
.acts { display: flex; gap: 6px; margin: 24px 0 0 264px; }
.acts button { width: 91px; }

.app { width: 1039px; height: 636px; flex: none; font-size: 9px; line-height: 12px; display: flex; flex-direction: column; overflow: hidden; background: #f0f0f0; }
.atitle { height: 17px; background: #fff; display: flex; align-items: center; padding: 0 15px 0 1px; gap: 3px; flex: none; }
.win { margin-left: auto; }
.menu { height: 15px; background: #fff; display: flex; align-items: center; padding-left: 4px; flex: none; }
.menu > svg { margin-right: 5px; }
.mdi { margin-left: auto; display: flex; gap: 2px; padding-right: 1px; }
.mdi i { width: 13px; height: 13px; border: 1px solid #f0f0f0; display: flex; align-items: center; justify-content: center; font-style: normal; line-height: 6px; color: #222; }
.ribbon { height: 56px; border-top: 1px solid #d5d6dd; border-bottom: 1px solid #d5d7e2; background: #eeeef0; display: flex; flex: none; }
.col { flex: none; padding-top: 2px; height: 54px; }
.col.sep { padding: 0; border-left: 1px solid #d5d7e2; }
.col.short { border-left: 1px solid #9098a8; height: 44px; margin-top: 5px; }
.col.dis, .dis { color: #9b9b9f; }
.rr { height: 15.400px; display: flex; align-items: center; }
.rr > svg { margin-right: 1px; }
.rr.tog { background: #cbcbcd; }
.rr.ctr { padding-left: 2px; }
.rr svg.tight { margin: 0 -4px 0 -2px; }
.bigi { margin: 3px auto 3px; }
.bigt { text-align: center; height: 8px; line-height: 8px; font-size: 8.800px; display: flex; justify-content: center; }
.bigt span { height: 8px; line-height: 8px; }
.barrow { margin: 0 auto; }
.layercombo { width: 120px; height: 14px; background: #fff; border: 1px solid #e2e3ea; display: flex; align-items: center; margin: 0; }
.layercombo i { width: 28px; height: 8px; background: #858df0; border: 1px solid #222; margin: 0 1px; }
.layercombo svg { margin-left: auto; }
.rtabs { height: 15px; display: flex; color: #555; flex: none; }
.rtabs > div { display: flex; justify-content: center; }
.rtabs > div.on { background: #f7f8fa; color: #1a6fb5; border: 1px solid #d8dbe6; border-top: 0; }
.help { margin: 1px 2px 0 auto; }
.work { display: flex; height: 516px; flex: none; }
.left { width: 192px; display: flex; flex-direction: column; }
.hatch { background: repeating-conic-gradient(#56627a 0 25%, #8b8f97 0 50%) 0 0 / 2px 2px; flex: none; }
.h4 { height: 4px; }
.v4 { width: 4px; }
.ph { height: 16.500px; flex: none; background: linear-gradient(#d4d8dc, #bfc4c9); display: flex; align-items: center; justify-content: space-between; padding: 0 5px 1px 2px; color: #2a2a2a; }
.ptree { height: 241.500px; background: #fff; flex: none; font: 7.800px/11px "DejaVu Sans Condensed", "DejaVu Sans", sans-serif; padding-top: 0; }
.tr { height: 11.750px; display: flex; align-items: center; padding-left: 2px; }
.tr.sub { padding-left: 13px; }
.tr span { margin-left: 2px; }
.tr.cur span { font-weight: bold; background: #f0f0f0; }
.props { flex: 1; padding: 3px 3px 0 3px; }
.frame { border: 1px solid #a9b1bf; padding: 2px; background: #f0f0f0; }
.props .frame { height: 223px; }
.ptable { height: 219px; background: #fff; border: 1px solid #888; border-right-color: #ddd; border-bottom-color: #ddd; }
.phead { display: grid; grid-template-columns: 38px 58px 26px 52px 1fr; height: 15px; border-bottom: 1px solid #777; }
.phead span { background: #f0f0f0; border-right: 1px solid #777; text-align: center; line-height: 13px; }
.phead span:last-child { border: 0; }
.vtab { width: 46px; height: 11px; border: 1px solid #a9b1bf; border-top: 0; padding-left: 3px; line-height: 9px; margin-top: -1px; background: #f0f0f0; }
.rightside { width: 843px; display: flex; flex-direction: column; }
.upper { display: flex; height: 398px; flex: none; }
.canvas { width: 530px; border-top: 1px solid #888; background: #fff; overflow: hidden; }
.cells { width: 129px; }
.comps { width: 176px; }
.cf { margin: 2.500px 3px 0; height: 365px; padding: 13px 0 0 7px; overflow: hidden; }
.hv { width: 125px; height: 64px; border: 1px solid #bbb; }
.hv h5 { margin: -7px 0 1px 4px; width: 80px; padding-left: 1px; font: inherit; background: #f0f0f0; }
.hrow { display: flex; align-items: center; height: 16px; margin: 4px 0 0 7px; }
.cmb { width: 39px; height: 15px; border: 1px solid #777; background: #fff; display: flex; align-items: center; justify-content: space-between; margin-left: 8px; padding-left: 1px; flex: none; }
.cmb svg { background: #f0f0f0; width: 11px; height: 11px; padding-top: 1px; }
.end { margin-left: 9px; }
.cmb.cut { margin-left: 4px; }
.two { margin-top: 8px; height: 20px; }
.two button { width: 43px; height: 20px; border: 1px solid #fff; border-right: 1.500px solid #777; border-bottom: 1.500px solid #777; background: #f0f0f0; }
.two i { width: 10px; height: 10px; border: 1px solid #ddd; border-top-color: #777; border-left-color: #777; background: #fff; margin: 2px 4px 0 10px; flex: none; }
.two > span { margin-top: 3px; }
.ctree { width: 105px; height: 277px; margin-top: 5px; background: #fff; border: 1px solid #ddd; border-top-color: #888; border-left-color: #888; padding-left: 3px; }
.ctree div { display: flex; align-items: center; gap: 4px; height: 13px; }
.ctree .kid { padding-left: 15px; gap: 2px; }
.btabs { display: flex; padding-left: 4px; line-height: 9px; }
.btabs b { font-weight: 400; padding-left: 3px; height: 10px; }
.btabs b.on { border: 1px solid #a9b1bf; border-top: 0; width: 55px; padding-left: 3px; margin-top: -1px; background: #f0f0f0; height: 11px; line-height: 10px; }
.btabs b.c { width: 60px; }
.pf { margin: 2.500px 3px 0; height: 365px; padding: 10px 0 0 5px; }
.rx { display: flex; align-items: center; padding-left: 5px; height: 19px; }
.rx i { width: 77px; height: 19px; background: #fff; border: 1px solid #ddd; border-top-color: #888; border-left-color: #888; margin-left: 9px; }
.plist { margin-top: 7px; width: 156px; height: 322px; background: #fff; border: 1px solid #ddd; border-top-color: #888; border-left-color: #888; padding: 0; }
.plist div { height: 13px; display: flex; align-items: center; }
.plist .cur span { background: #f0f0f0; }
.mh { height: 16px; }
.msgs { height: 83px; display: flex; background: #fff; flex: none; overflow: hidden; }
.mlist { flex: 1; font: 8.800px/10.600px "Liberation Serif", serif; color: #222; padding: 0 0 0 1px; }
.mlist div { display: flex; height: 10.620px; align-items: center; }
.mlist span { margin-left: 2px; }
.sb { width: 12px; background: #f6f6f6; display: flex; flex-direction: column; justify-content: space-between; }
.sb i { width: 12px; height: 12px; background: #f0f0f0; border: 1px solid #e4e4e4; border-right-color: #888; border-bottom: 1px solid #777; display: flex; align-items: center; justify-content: center; }
.sb .thumb { height: 9px; margin-top: 18px; }
.mtabs { height: 15px; display: flex; flex: none; color: #d8d8d8; padding-left: 4px; }
.mtabs b { font-weight: 400; background: #fff; color: #222; width: 82px; height: 14px; margin-left: 5px; padding-left: 4px; }
.status { height: 17px; background: #ced5de; display: flex; align-items: flex-start; flex: none; color: #777; }
.ready { margin: 3px 263px 0 2px; color: #444; }
.sbtn { height: 15px; margin-top: 1.500px; width: 83px; background: #cfe3f7; border: 1px solid #1f66b0; display: flex; align-items: center; padding-left: 4px; gap: 4px; font: 8.600px/11px "Liberation Serif", serif; color: #111; flex: none; }
.s2 { width: 73px; margin-left: 2px; gap: 5px; }
.blank { width: 70px; height: 17px; margin-left: 2px; background: #e6e9ee; flex: none; }
.rl { height: 17px; padding-top: 3px; display: flex; justify-content: center; flex: none; }
.rv { height: 16px; background: #ebebee; display: flex; justify-content: center; padding-top: 1px; flex: none; }
.unit { width: 49px; height: 15px; margin: 0 0 0 2px; background: #fff; border: 1px solid #888; display: flex; justify-content: space-between; padding-left: 1px; color: #111; flex: none; }
.unit i { width: 11px; background: #eee; border: 1px solid #999; display: flex; align-items: center; justify-content: center; }
.ang { width: 28px; }
.av { width: 33px; }
</style>
